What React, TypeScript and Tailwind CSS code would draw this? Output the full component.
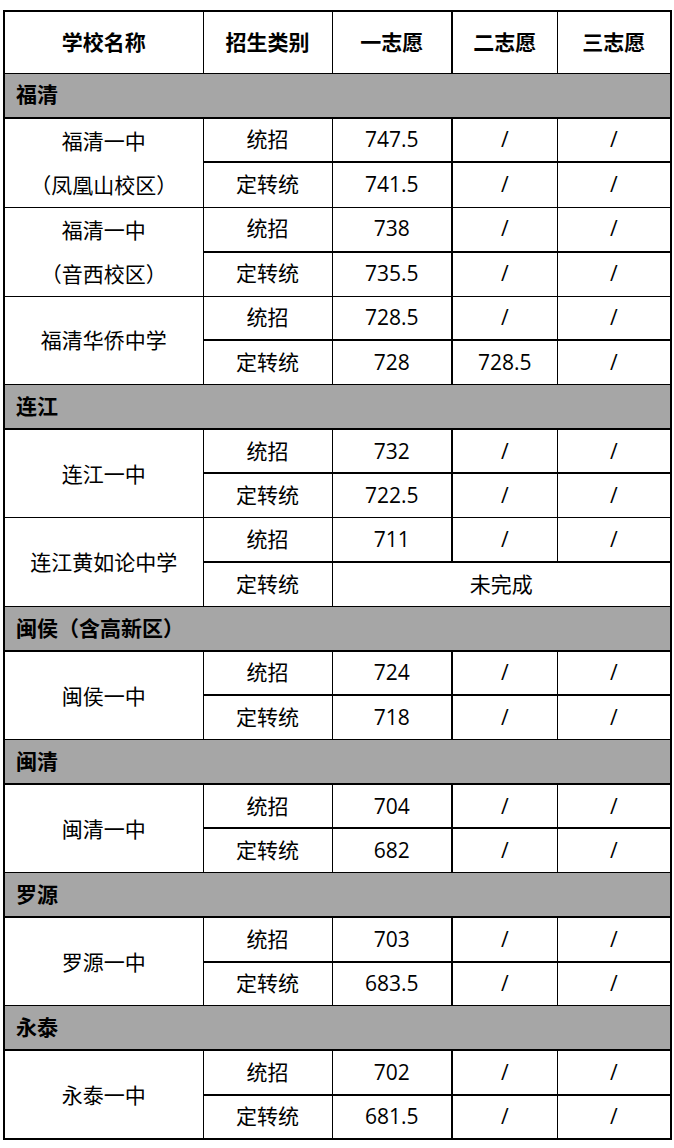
import React from "react";

type School = { name: string[]; rows: string[][] };
type Section = { name: string; schools: School[] };

const data: Section[] = [
  {
    name: "福清",
    schools: [
      { name: ["福清一中", "（凤凰山校区）"], rows: [["统招", "747.5", "/", "/"], ["定转统", "741.5", "/", "/"]] },
      { name: ["福清一中", "（音西校区）"], rows: [["统招", "738", "/", "/"], ["定转统", "735.5", "/", "/"]] },
      { name: ["福清华侨中学"], rows: [["统招", "728.5", "/", "/"], ["定转统", "728", "728.5", "/"]] },
    ],
  },
  {
    name: "连江",
    schools: [
      { name: ["连江一中"], rows: [["统招", "732", "/", "/"], ["定转统", "722.5", "/", "/"]] },
      { name: ["连江黄如论中学"], rows: [["统招", "711", "/", "/"], ["定转统", "未完成"]] },
    ],
  },
  {
    name: "闽侯（含高新区）",
    schools: [{ name: ["闽侯一中"], rows: [["统招", "724", "/", "/"], ["定转统", "718", "/", "/"]] }],
  },
  {
    name: "闽清",
    schools: [{ name: ["闽清一中"], rows: [["统招", "704", "/", "/"], ["定转统", "682", "/", "/"]] }],
  },
  {
    name: "罗源",
    schools: [{ name: ["罗源一中"], rows: [["统招", "703", "/", "/"], ["定转统", "683.5", "/", "/"]] }],
  },
  {
    name: "永泰",
    schools: [{ name: ["永泰一中"], rows: [["统招", "702", "/", "/"], ["定转统", "681.5", "/", "/"]] }],
  },
];

const font = { fontFamily: '"Open Sans", "Noto Sans CJK SC", sans-serif' };

export default function App() {
  return (
    <div className="bg-white w-[674px] h-[1148px] pt-[10px] pl-[3px]" style={font}>
      <table className="table-fixed border-collapse border-2 border-black w-[667px] text-[21px] text-black">
        <colgroup>
          <col className="w-[199px]" />
          <col className="w-[129px]" />
          <col className="w-[120px]" />
          <col className="w-[105px]" />
          <col className="w-[114px]" />
        </colgroup>
        <thead>
          <tr className="h-[62px]">
            <th className="border border-black font-bold text-center align-middle">学校名称</th>
            <th className="border border-black font-bold text-center align-middle">招生类别</th>
            <th className="border border-black border-r-2 font-bold text-center align-middle">一志愿</th>
            <th className="border border-black font-bold text-center align-middle">二志愿</th>
            <th className="border border-black font-bold text-center align-middle">三志愿</th>
          </tr>
        </thead>
        <tbody>
          {data.map((sec) => (
            <React.Fragment key={sec.name}>
              <tr className="h-[44.5px]">
                <td colSpan={5} className="bg-[#a6a6a6] border border-black border-b-2 font-bold pl-[11px] align-middle">
                  {sec.name}
                </td>
              </tr>
              {sec.schools.map((s, si) => (
                <React.Fragment key={si}>
                  {s.rows.map((r, ri) => (
                    <tr key={ri} className="h-[44.33px]">
                      {ri === 0 && (
                        <td rowSpan={2} className="border border-black text-center align-middle leading-[44px]">
                          {s.name.map((n) => (
                            <div key={n}>{n}</div>
                          ))}
                        </td>
                      )}
                      <td className={"border border-black text-center align-middle " + (ri === 0 ? "border-b-2" : "")}>
                        {r[0]}
                      </td>
                      {r.length === 2 ? (
                        <td colSpan={3} className="border border-black text-center align-middle">
                          {r[1]}
                        </td>
                      ) : (
                        <>
                          <td className={"border border-black border-r-2 text-center align-middle " + (ri === 0 ? "border-b-2" : "")}>
                            {r[1]}
                          </td>
                          <td className={"border border-black text-center align-middle " + (ri === 0 ? "border-b-2" : "")}>
                            {r[2]}
                          </td>
                          <td className={"border border-black text-center align-middle " + (ri === 0 ? "border-b-2" : "")}>
                            {r[3]}
                          </td>
                        </>
                      )}
                    </tr>
                  ))}
                </React.Fragment>
              ))}
            </React.Fragment>
          ))}
        </tbody>
      </table>
    </div>
  );
}
